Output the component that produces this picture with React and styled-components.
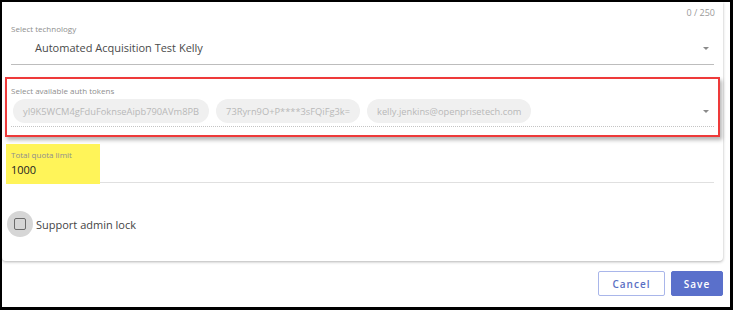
import React from 'react';
import styled, { createGlobalStyle } from 'styled-components';

const GlobalStyle = createGlobalStyle`
  html, body {
    margin: 0;
    padding: 0;
    background: #fff;
    overflow: hidden;
  }
  body {
    font-family: 'Open Sans', 'Liberation Sans', sans-serif;
  }
`;

const Frame = styled.div`
  box-sizing: border-box;
  width: 733px;
  height: 310px;
  border-style: solid;
  border-color: #000;
  border-width: 2px 3px 3px 2px;
  background: #fff;
  display: flex;
  flex-direction: column;
`;

const Card = styled.div`
  box-sizing: border-box;
  width: 721px;
  height: 259px;
  padding: 6px 9px 0;
  background: #fff;
  border-radius: 0 0 4px 4px;
  box-shadow: 0 1px 3px rgba(0, 0, 0, 0.3);
  display: flex;
  flex-direction: column;
`;

const Counter = styled.div`
  align-self: flex-end;
  margin-right: -1px;
  font-size: 9px;
  line-height: 10px;
  color: #9a9a9a;
`;

const Label = styled.div`
  font-size: 8px;
  line-height: 10px;
  color: #8e8e8e;
`;

const SelectField = styled.div`
  margin-top: 6px;
  padding-bottom: 9px;
  border-bottom: 1px solid #bdbdbd;
`;

const SelectRow = styled.div`
  display: flex;
  align-items: center;
  justify-content: space-between;
  margin-top: ${(p) => p.$gap || 7}px;
  padding-left: ${(p) => p.$indent || 0}px;
  padding-right: 5px;
`;

const Value = styled.div`
  font-size: 11px;
  line-height: 14px;
  color: ${(p) => p.$color || '#4a4a4a'};
`;

const Caret = styled.span`
  width: 0;
  height: 0;
  border-left: 3.5px solid transparent;
  border-right: 3.5px solid transparent;
  border-top: 3.5px solid #8a8a8a;
`;

const Annotated = styled.div`
  margin: 12px -6px 0;
  padding: 7px 4px 8px;
  border: 2px solid #ee3a3a;
  box-shadow: 2px 3px 4px rgba(0, 0, 0, 0.3);
`;

const TokenField = styled.div`
  padding-bottom: 3px;
  border-bottom: 1px dotted #c4c4c4;
`;

const Chips = styled.div`
  display: flex;
  gap: 7px;
  padding-left: 2px;
`;

const Chip = styled.span`
  height: 24px;
  padding: 0 10px;
  display: inline-flex;
  align-items: center;
  border-radius: 12px;
  background: #f0f0f0;
  color: #b8b8b8;
  font-size: 9.3px;
  white-space: nowrap;
`;

const QuotaField = styled.div`
  position: relative;
  z-index: 0;
  margin-top: 13px;
  padding-bottom: 5px;
  border-bottom: 1px solid #e0e0e0;

  &::before {
    content: '';
    position: absolute;
    z-index: -1;
    left: -5px;
    top: -6px;
    width: 94px;
    height: 40px;
    background: #fff459;
  }
`;

const QuotaValue = styled(Value)`
  margin-top: 3px;
  color: #222;
`;

const CheckRow = styled.label`
  display: flex;
  align-items: center;
  margin: 28px 0 0 -4px;
  font-size: 11px;
  color: #444;
`;

const Ripple = styled.span`
  width: 26px;
  height: 26px;
  margin-right: 3px;
  border-radius: 50%;
  background: #d6d6d6;
  display: flex;
  align-items: center;
  justify-content: center;
`;

const Box = styled.span`
  box-sizing: border-box;
  width: 12px;
  height: 12px;
  border: 1.5px solid #6b6b6b;
  border-radius: 2px;
`;

const Footer = styled.div`
  display: flex;
  justify-content: flex-end;
  gap: 6px;
  margin-top: 10px;
  padding-right: 7px;
`;

const Button = styled.button`
  box-sizing: border-box;
  height: 25px;
  padding: 0;
  width: ${(p) => (p.$primary ? 52 : 67)}px;
  border-radius: 2px;
  border: 1px solid ${(p) => (p.$primary ? '#5a70cb' : '#a9b6ea')};
  background: ${(p) => (p.$primary ? '#5a70cb' : '#fff')};
  color: ${(p) => (p.$primary ? '#fff' : '#5a6fc4')};
  font-family: 'Open Sans', 'Liberation Sans', sans-serif;
  font-size: 10px;
  font-weight: 600;
  letter-spacing: 1px;
`;

const tokens = [
  'yI9K5WCM4gFduFoknseAipb790AVm8PB',
  '73Ryrn9O+P****3sFQiFg3k=',
  'kelly.jenkins@openprisetech.com',
];

const App = () => (
  <>
    <GlobalStyle />
    <Frame>
      <Card>
        <Counter>0 / 250</Counter>
        <SelectField>
          <Label>Select technology</Label>
          <SelectRow $indent={24}>
            <Value>Automated Acquisition Test Kelly</Value>
            <Caret />
          </SelectRow>
        </SelectField>

        <Annotated>
          <TokenField>
            <Label>Select available auth tokens</Label>
            <SelectRow $gap={3}>
              <Chips>
                {tokens.map((t) => (
                  <Chip key={t}>{t}</Chip>
                ))}
              </Chips>
              <Caret />
            </SelectRow>
          </TokenField>
        </Annotated>

        <QuotaField>
          <Label>Total quota limit</Label>
          <QuotaValue>1000</QuotaValue>
        </QuotaField>

        <CheckRow>
          <Ripple>
            <Box />
          </Ripple>
          Support admin lock
        </CheckRow>
      </Card>
      <Footer>
        <Button>Cancel</Button>
        <Button $primary>Save</Button>
      </Footer>
    </Frame>
  </>
);

export default App;
